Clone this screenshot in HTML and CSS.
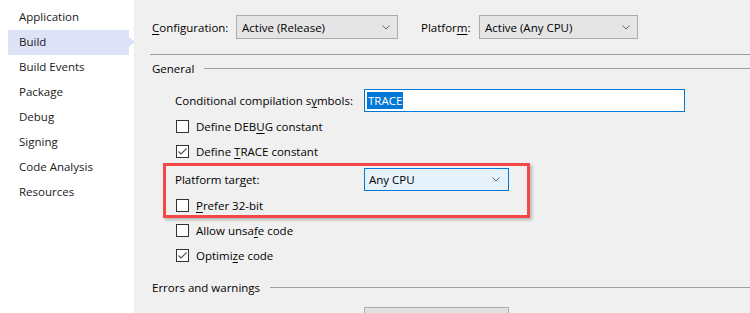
FILE: index.html
```html
<!DOCTYPE html>
<html lang="en">
<head>
    <meta charset="UTF-8">
    <meta name="viewport" content="width=device-width, initial-scale=1.0">
    <title>Build</title>
    <link rel="stylesheet" href="styles.css">
</head>
<body>
    <div class="page">
        <ul class="nav">
            <li>Application</li>
            <li class="active">Build</li>
            <li>Build Events</li>
            <li>Package</li>
            <li>Debug</li>
            <li>Signing</li>
            <li>Code Analysis</li>
            <li>Resources</li>
        </ul>

        <div class="main">
            <div class="toolbar">
                <span class="config-label"><u>C</u>onfiguration:</span>
                <div class="combo config-combo">
                    <span>Active (Release)</span>
                    <svg class="chevron" width="8" height="5" viewBox="0 0 8 5"><path d="M0.5 0.5 L4 4 L7.5 0.5" /></svg>
                </div>
                <span class="platform-label">Platfor<u>m</u>:</span>
                <div class="combo platform-combo">
                    <span>Active (Any CPU)</span>
                    <svg class="chevron" width="8" height="5" viewBox="0 0 8 5"><path d="M0.5 0.5 L4 4 L7.5 0.5" /></svg>
                </div>
            </div>

            <div class="rule"></div>

            <div class="section-head">
                <span>General</span>
                <div class="line"></div>
            </div>

            <div class="form">
                <div class="field-row">
                    <span class="field-label">Conditional compilation s<u>y</u>mbols:</span>
                    <div class="textbox"><span class="selected">TRACE</span></div>
                </div>
                <div class="check-row first">
                    <span class="check"></span>
                    <span>Define DEB<u>U</u>G constant</span>
                </div>
                <div class="check-row">
                    <span class="check"><svg width="11" height="11" viewBox="0 0 11 11"><path d="M1.5 5.5 L4 8 L9.5 2.5" /></svg></span>
                    <span>Define <u>T</u>RACE constant</span>
                </div>

                <div class="marked">
                    <div class="field-row target-row">
                        <span class="field-label">Platform tar<u>g</u>et:</span>
                        <div class="combo focus-combo">
                            <span>Any CPU</span>
                            <svg class="chevron" width="8" height="5" viewBox="0 0 8 5"><path d="M0.5 0.5 L4 4 L7.5 0.5" /></svg>
                        </div>
                    </div>
                    <div class="check-row prefer-row">
                        <span class="check"></span>
                        <span><u>P</u>refer 32-bit</span>
                    </div>
                </div>

                <div class="check-row">
                    <span class="check"></span>
                    <span>Allow unsa<u>f</u>e code</span>
                </div>
                <div class="check-row">
                    <span class="check"><svg width="11" height="11" viewBox="0 0 11 11"><path d="M1.5 5.5 L4 8 L9.5 2.5" /></svg></span>
                    <span>Optimi<u>z</u>e code</span>
                </div>
            </div>

            <div class="section-head errors-head">
                <span>Errors and warnings</span>
                <div class="line"></div>
            </div>

            <div class="form">
                <div class="field-row">
                    <span class="field-label"></span>
                    <div class="combo cut-combo"></div>
                </div>
            </div>
        </div>
    </div>
</body>
</html>
```

FILE: styles.css
```css
* {
    margin: 0;
    padding: 0;
    box-sizing: border-box;
}

html, body {
    height: 100%;
    overflow: hidden;
}

body {
    font-family: "Open Sans", "Noto Sans", sans-serif;
    font-size: 11.5px;
    color: #1a1a1a;
    background-color: #f0f0f0;
}

u {
    text-decoration-thickness: 1px;
    text-underline-offset: 2px;
}

.page {
    display: flex;
    height: 100%;
}

/* left navigation */

.nav {
    list-style: none;
    width: 134px;
    flex-shrink: 0;
    background-color: #ffffff;
    padding-top: 5px;
}

.nav li {
    position: relative;
    height: 25px;
    line-height: 24px;
    padding-left: 19px;
}

.nav li.active {
    margin-left: 8px;
    width: 121px;
    padding-left: 11px;
    background-color: #dee3f8;
}

.nav li.active::after {
    content: "";
    position: absolute;
    right: -6px;
    top: 7px;
    border-top: 5px solid transparent;
    border-bottom: 5px solid transparent;
    border-left: 6px solid #dee3f8;
}

/* main panel */

.main {
    flex: 1;
    padding: 15px 0 0 16px;
    color: #000;
    overflow: hidden;
}

.toolbar {
    display: flex;
    align-items: center;
    height: 24px;
    padding-left: 2px;
}

.config-label {
    width: 84px;
}

.platform-label {
    width: 58px;
    margin-left: 23px;
}

.combo {
    display: flex;
    align-items: center;
    justify-content: space-between;
    height: 24px;
    padding: 0 7px 0 5px;
    border: 1px solid #acacac;
    background-color: #e5e5e5;
}

.config-combo {
    width: 162px;
}

.platform-combo {
    width: 159px;
}

.chevron path {
    fill: none;
    stroke: #6a6a6a;
    stroke-width: 1;
}

.rule {
    height: 1px;
    margin-top: 15px;
    background-color: #a0a0a0;
}

.section-head {
    display: flex;
    align-items: center;
    height: 16px;
    margin-top: 5px;
    padding-left: 2px;
}

.section-head .line {
    flex: 1;
    height: 1px;
    margin-left: 10px;
    background-color: #a0a0a0;
}

.form {
    padding-left: 25px;
    margin-top: 13px;
}

.field-row {
    display: flex;
    align-items: center;
    height: 23px;
}

.field-label {
    width: 189px;
}

.textbox {
    width: 321px;
    height: 23px;
    padding: 2px 0 0 2px;
    border: 1px solid #0078d7;
    background-color: #ffffff;
}

.selected {
    display: inline-block;
    height: 17px;
    line-height: 17px;
    padding: 0 1px;
    background-color: #0078d7;
    color: #ffffff;
}

.check-row {
    display: flex;
    align-items: center;
    height: 25px;
}

.check-row.first {
    margin-top: 2px;
}

.check {
    display: flex;
    align-items: center;
    justify-content: center;
    width: 13px;
    height: 13px;
    margin: 0 7px 0 1px;
    border: 1px solid #333333;
    background-color: #ffffff;
}

.check path {
    fill: none;
    stroke: #505050;
    stroke-width: 1.1;
}

.marked {
    position: relative;
    margin-top: 4px;
}

.marked::before {
    content: "";
    position: absolute;
    left: -12px;
    top: -5px;
    width: 361px;
    bottom: 0;
    border: 3px solid #f44848;
    box-shadow: 2px 2px 3px rgba(0, 0, 0, 0.25);
}

.target-row .combo {
    height: 23px;
}

.focus-combo {
    width: 145px;
    padding: 0 8px 0 4px;
    border-color: #0078d7;
    background-color: #e5f1fb;
}

.prefer-row {
    margin-top: 2px;
}

.errors-head {
    margin-top: 11px;
}

.errors-head + .form {
    margin-top: 12px;
}

.cut-combo {
    width: 145px;
    height: 23px;
    border-color: #adadad;
    background-color: #e1e1e1;
}
```
